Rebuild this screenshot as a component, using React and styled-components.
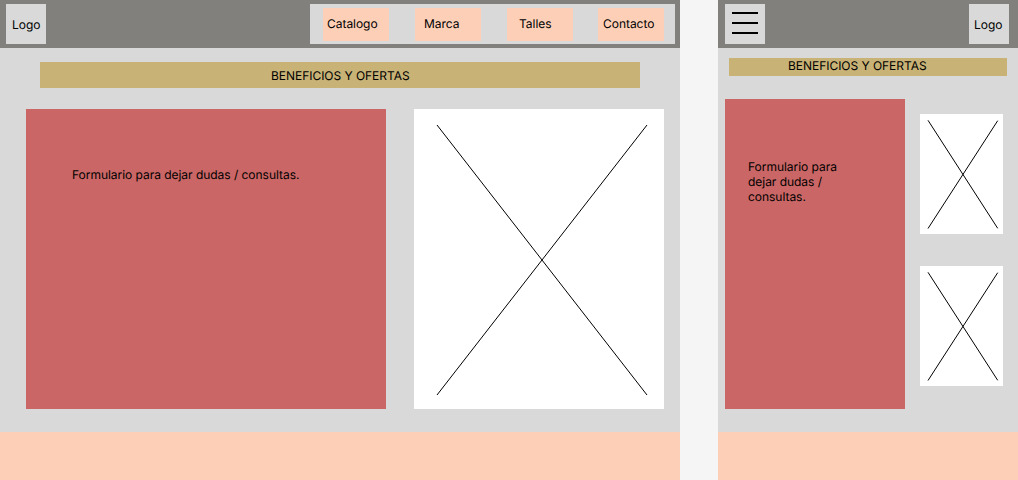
import React from 'react';
import styled, { createGlobalStyle } from 'styled-components';

const GlobalStyle = createGlobalStyle`
  * { box-sizing: border-box; }
  body {
    margin: 0;
    background: #f5f5f5;
    color: #000;
    font: 400 12px/15px Inter, "Liberation Sans", sans-serif;
    letter-spacing: -0.035px;
    text-rendering: geometricPrecision;
  }
`;

const Board = styled.main`
  display: flex;
  justify-content: space-between;
  width: 1018px;
  height: 480px;
  overflow: hidden;
`;

const Screen = styled.section`
  display: flex;
  flex-direction: column;
  width: ${(p) => p.$width}px;
  height: 480px;
  background: #d9d9d9;
`;

const Header = styled.header`
  display: flex;
  justify-content: space-between;
  flex: none;
  height: 48px;
  padding: ${(p) => p.$padding};
  background: #82807d;
`;

const Logo = styled.div`
  width: 40px;
  height: 40px;
  padding: 13px 0 0 ${(p) => p.$inset}px;
  background: #d9d9d9;
`;

const Nav = styled.nav`
  display: grid;
  grid-template-columns: 92px 92px 91px 66px;
  width: 365px;
  height: 40px;
  padding: 4px 0 0 13px;
  background: #d9d9d9;
`;

const NavItem = styled.a`
  width: 66px;
  height: 33px;
  padding: 8px 0 0 ${(p) => p.$inset}px;
  background: #fecfb7;
`;

const MenuButton = styled.button`
  display: flex;
  flex-direction: column;
  gap: 8px;
  width: 40px;
  height: 40px;
  padding: 8px 7px;
  border: 0;
  background: #d9d9d9;
`;

const MenuBar = styled.span`
  height: 2px;
  background: #000;
`;

const Banner = styled.div`
  flex: none;
  height: ${(p) => p.$height}px;
  margin: ${(p) => p.$margin};
  padding: ${(p) => p.$padding};
  background: #c8b276;
`;

const Content = styled.div`
  display: flex;
  flex: 1;
  align-items: flex-start;
  gap: ${(p) => p.$gap}px;
  padding: ${(p) => p.$padding};
`;

const FormPanel = styled.div`
  width: ${(p) => p.$width}px;
  height: ${(p) => p.$height}px;
  padding: ${(p) => p.$padding};
  background: #ca6665;
`;

const Gallery = styled.div`
  display: flex;
  flex-direction: column;
  gap: 32px;
  padding-top: 15px;
`;

const Picture = styled.svg`
  display: block;
  background: #fff;
  stroke: #000;
`;

const Footer = styled.footer`
  flex: none;
  height: 48px;
  background: #fecfb7;
`;

const LargePicture = () => (
  <Picture width="250" height="300" viewBox="0 0 250 300">
    <path d="M23 16 233 286M233 16 23 286" />
  </Picture>
);

const SmallPicture = () => (
  <Picture width="83" height="120" viewBox="0 0 83 120">
    <path d="M8 6.3 77.7 114.3M77.7 6.7 8 114.5" />
  </Picture>
);

export default function App() {
  return (
    <>
      <GlobalStyle />
      <Board>
        <Screen $width={680}>
          <Header $padding="4px 5px 4px 6px">
            <Logo $inset={6}>Logo</Logo>
            <Nav>
              <NavItem $inset={4}>Catalogo</NavItem>
              <NavItem $inset={9}>Marca</NavItem>
              <NavItem $inset={12}>Talles</NavItem>
              <NavItem $inset={5}>Contacto</NavItem>
            </Nav>
          </Header>
          <Banner $height={26} $margin="14px 40px 0" $padding="6px 0 0 231px">
            BENEFICIOS Y OFERTAS
          </Banner>
          <Content $gap={28} $padding="21px 0 0 26px">
            <FormPanel $width={360} $height={300} $padding="58px 0 0 46px">
              Formulario para dejar dudas / consultas.
            </FormPanel>
            <LargePicture />
          </Content>
          <Footer />
        </Screen>
        <Screen $width={300}>
          <Header $padding="4px 9px 4px 7px">
            <MenuButton aria-label="Menu">
              <MenuBar />
              <MenuBar />
              <MenuBar />
            </MenuButton>
            <Logo $inset={5}>Logo</Logo>
          </Header>
          <Banner $height={18} $margin="10px 11px 0" $padding="0 0 0 59px">
            BENEFICIOS Y OFERTAS
          </Banner>
          <Content $gap={15} $padding="23px 0 0 7px">
            <FormPanel $width={180} $height={310} $padding="60px 60px 0 23px">
              Formulario para dejar dudas / consultas.
            </FormPanel>
            <Gallery>
              <SmallPicture />
              <SmallPicture />
            </Gallery>
          </Content>
          <Footer />
        </Screen>
      </Board>
    </>
  );
}
